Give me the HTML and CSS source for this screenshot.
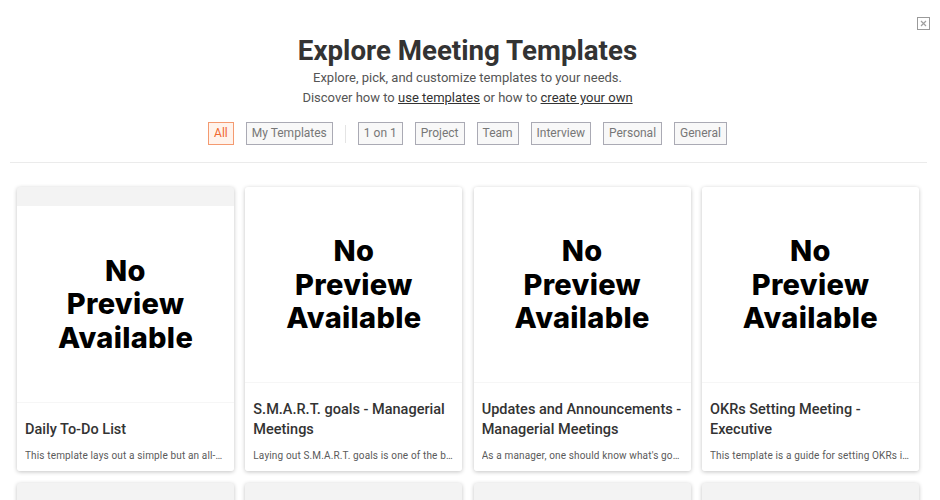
FILE: index.html
```html
<!DOCTYPE html>
<html>
<head>
<meta charset="utf-8">
<link rel="stylesheet" href="styles.css">
</head>
<body>
<div class="modal">
  <button class="close" aria-label="Close"><svg width="7" height="7" viewBox="0 0 7 7"><path d="M1 1L6 6M6 1L1 6" stroke="#a0a0a0" stroke-width="1.2"/></svg></button>
  <header class="head">
    <h1 class="title">Explore Meeting Templates</h1>
    <p class="sub">Explore, pick, and customize templates to your needs.</p>
    <p class="sub">Discover how to <a href="#">use templates</a> or how to <a href="#">create your own</a></p>
    <div class="filters">
      <span class="chip active">All</span>
      <span class="chip">My Templates</span>
      <span class="sep"></span>
      <span class="chip">1 on 1</span>
      <span class="chip">Project</span>
      <span class="chip">Team</span>
      <span class="chip">Interview</span>
      <span class="chip">Personal</span>
      <span class="chip">General</span>
    </div>
  </header>
  <div class="divider"></div>
  <div class="grid">
    <div class="card">
      <div class="preview">No<br>Preview<br>Available</div>
      <div class="body">
        <div class="ctitle">Daily To-Do List</div>
        <div class="desc">This template lays out a simple but an all-round daily to-do list</div>
      </div>
    </div>
    <div class="card">
      <div class="preview">No<br>Preview<br>Available</div>
      <div class="body">
        <div class="ctitle">S.M.A.R.T. goals - Managerial Meetings</div>
        <div class="desc">Laying out S.M.A.R.T. goals is one of the best ways to</div>
      </div>
    </div>
    <div class="card">
      <div class="preview">No<br>Preview<br>Available</div>
      <div class="body">
        <div class="ctitle">Updates and Announcements - Managerial Meetings</div>
        <div class="desc">As a manager, one should know what's going on</div>
      </div>
    </div>
    <div class="card">
      <div class="preview">No<br>Preview<br>Available</div>
      <div class="body">
        <div class="ctitle">OKRs Setting Meeting - Executive</div>
        <div class="desc">This template is a guide for setting OKRs in your team</div>
      </div>
    </div>
    <div class="card"><div class="preview">No<br>Preview<br>Available</div><div class="body"><div class="ctitle">Weekly Review</div><div class="desc">A simple weekly review</div></div></div>
    <div class="card"><div class="preview">No<br>Preview<br>Available</div><div class="body"><div class="ctitle">Weekly Review</div><div class="desc">A simple weekly review</div></div></div>
    <div class="card"><div class="preview">No<br>Preview<br>Available</div><div class="body"><div class="ctitle">Weekly Review</div><div class="desc">A simple weekly review</div></div></div>
    <div class="card"><div class="preview">No<br>Preview<br>Available</div><div class="body"><div class="ctitle">Weekly Review</div><div class="desc">A simple weekly review</div></div></div>
  </div>
</div>
</body>
</html>
```
FILE: styles.css
```css
html, body {
  margin: 0;
  padding: 0;
  background: #fff;
  font-family: Roboto, "Liberation Sans", sans-serif;
  overflow: hidden;
}
.modal {
  position: relative;
  width: 940px;
  height: 500px;
  overflow: hidden;
}
.close {
  position: absolute;
  top: 17px;
  left: 917px;
  width: 13px;
  height: 13px;
  padding: 0;
  border: 1px solid #9a9a9a;
  background: #fff;
  display: flex;
  align-items: center;
  justify-content: center;
}
.head {
  display: flex;
  flex-direction: column;
  align-items: center;
  padding-top: 34px;
  width: 935px;
}
.title {
  margin: 0;
  font-size: 27.7px;
  line-height: 34px;
  font-weight: 700;
  color: #333;
}
.sub {
  margin: 0;
  font-size: 13px;
  line-height: 20px;
  color: #555;
}
.sub a {
  color: #333;
  text-decoration: underline;
}
.filters {
  display: flex;
  align-items: center;
  gap: 12px;
  margin-top: 14px;
}
.chip {
  display: inline-block;
  height: 23px;
  box-sizing: border-box;
  padding: 0 5px;
  line-height: 21px;
  font-size: 12px;
  color: #777;
  background: #f8f8f8;
  border: 1px solid #aaaab4;
}
.chip.active {
  color: #f06a30;
  background: #fff3ec;
  border-color: #f49a70;
}
.sep {
  width: 1px;
  height: 18px;
  background: #e4e4e4;
}
.divider {
  height: 1px;
  background: #ebebeb;
  margin: 17px 13px 0 10px;
}
.grid {
  display: grid;
  grid-template-columns: repeat(4, 217px);
  column-gap: 11.33px;
  row-gap: 12px;
  padding: 24px 0 0 17px;
}
.card {
  height: 284px;
  background: #f3f3f3;
  border-radius: 3px;
  box-shadow: 0 1px 4px rgba(0,0,0,0.24);
  display: flex;
  flex-direction: column;
  justify-content: flex-end;
  overflow: hidden;
}
.preview {
  height: 196px;
  background: #fff;
  border-bottom: 1px solid #f6f6f6;
  display: flex;
  align-items: center;
  justify-content: center;
  text-align: center;
  font-family: Inter, "Noto Sans", sans-serif;
  font-weight: 800;
  font-size: 29px;
  line-height: 33.5px;
  color: #000;
  letter-spacing: 0.3px;
}
.body {
  background: #fff;
  padding: 17px 9px 8px 8px;
}
.ctitle {
  font-size: 14.5px;
  line-height: 20px;
  font-weight: 500;
  color: #333;
}
.desc {
  margin-top: 9px;
  font-size: 10px;
  line-height: 14px;
  color: #5a5a5a;
  letter-spacing: 0.15px;
  white-space: nowrap;
  overflow: hidden;
  text-overflow: ellipsis;
}
```
